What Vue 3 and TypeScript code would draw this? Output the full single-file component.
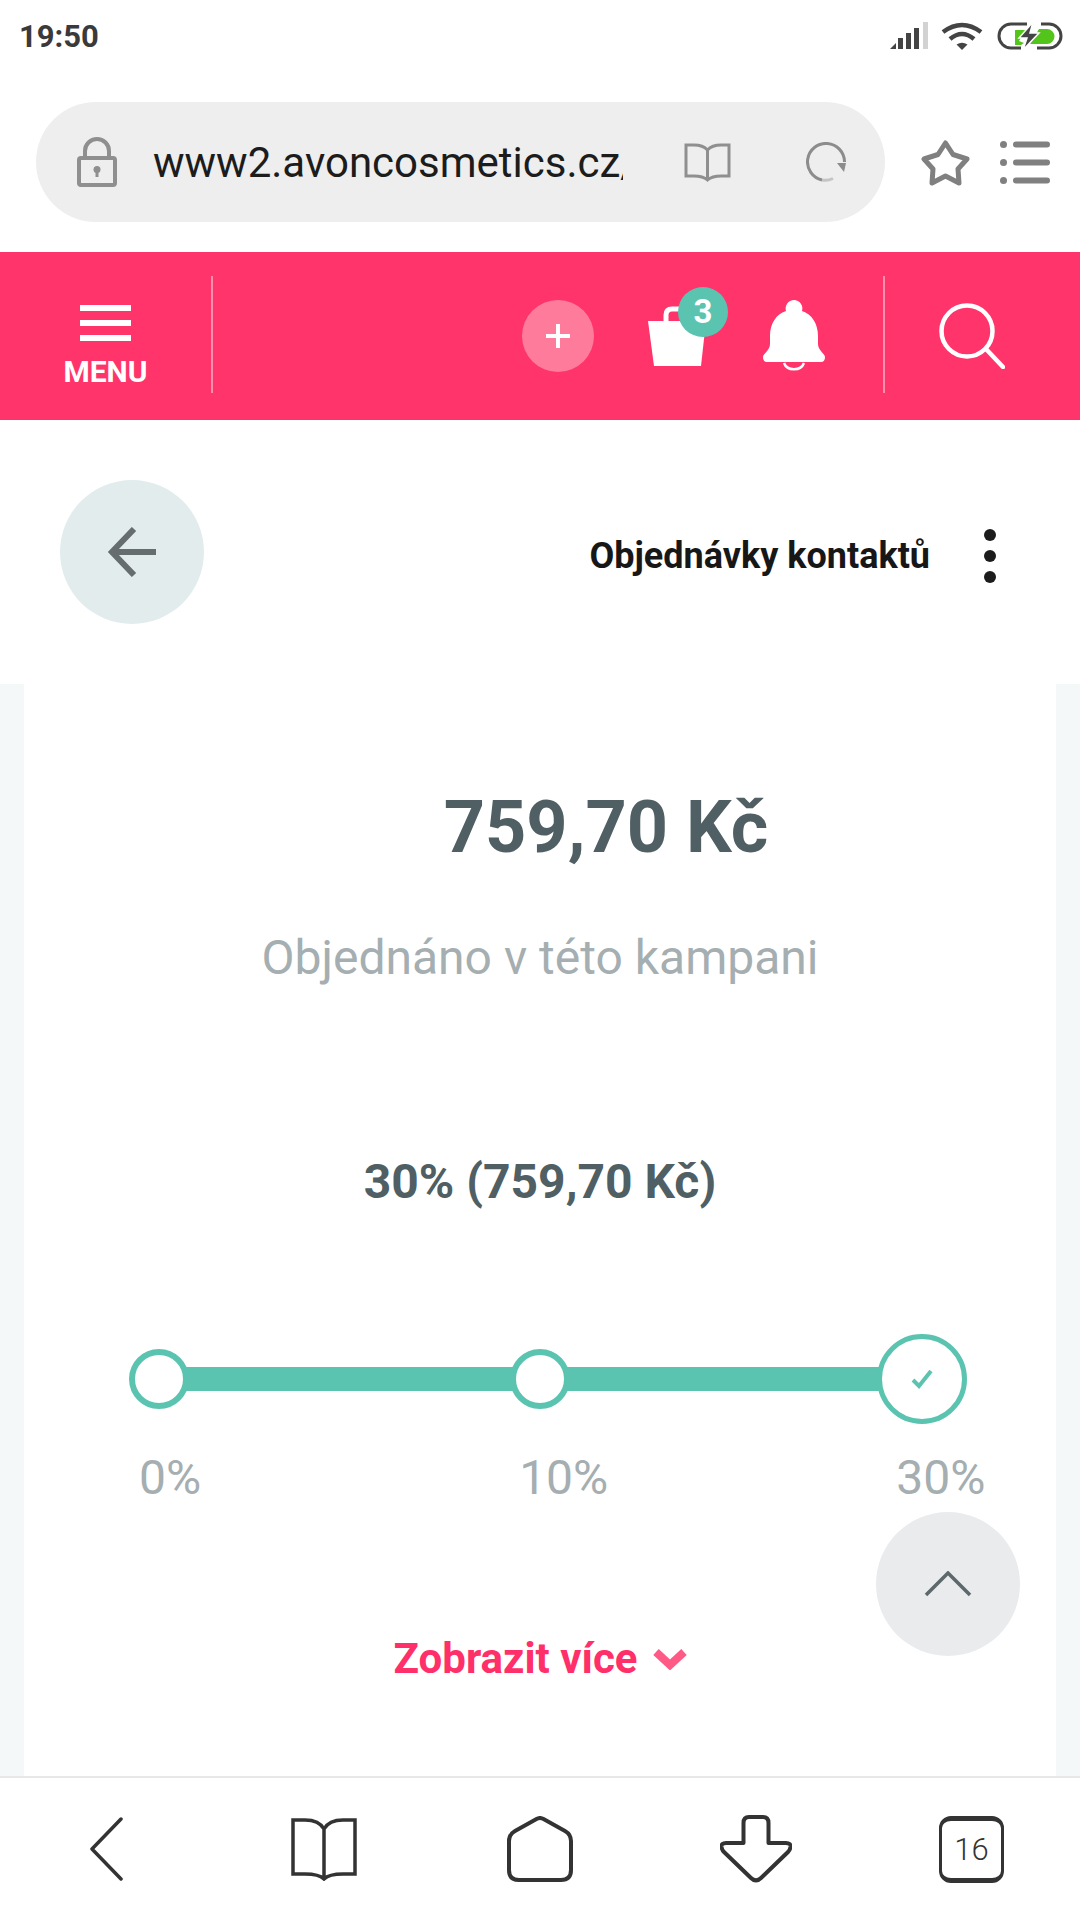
<script setup lang="ts">
const stops = [
  { label: '0%', cls: 'first' },
  { label: '10%', cls: 'mid' },
  { label: '30%', cls: 'last' },
]
</script>

<template>
  <div class="page">
    <div class="status">
      <span class="clock">19:50</span>
      <div class="status-icons">
        <svg width="40" height="28" viewBox="0 0 40 28">
          <polygon points="0,27 6,21 6,27" fill="#444" />
          <rect x="8" y="16" width="5" height="11" fill="#444" />
          <rect x="16" y="11" width="5" height="16" fill="#444" />
          <rect x="24" y="6" width="5" height="21" fill="#444" />
          <rect x="33" y="0" width="5" height="27" fill="#d2d2d2" />
        </svg>
        <svg class="wifi" width="42" height="28" viewBox="0 0 42 28" fill="none" stroke="#444" stroke-width="4.5">
          <path d="M2 10 Q21 -4 40 10" />
          <path d="M9 17 Q21 7 33 17" />
          <path d="M15.500 22.500 Q21 19 26.500 22.500 L21 28 Z" fill="#444" stroke="none" />
        </svg>
        <svg width="66" height="30" viewBox="0 0 66 30">
          <path d="M30 3 H14 A12 12 0 0 0 14 27 H24 M40 27 H52 A12 12 0 0 0 52 3 H44" fill="none" stroke="#444" stroke-width="3" />
          <path d="M18 9 H29 L22 20 L27 22 L24 24 H18 Z" fill="#52c41a" />
          <path d="M42 8 H50 A7 7 0 0 1 50 23 H33 Z" fill="#52c41a" />
          <path d="M36 1 L22 17 H30 L26 29 L42 12 H33 Z" fill="#444" stroke="#fff" stroke-width="1.500" />
        </svg>
      </div>
    </div>

    <div class="browser">
      <div class="urlbar">
        <svg class="lock" width="40" height="50" viewBox="0 0 40 50" fill="none" stroke="#8f8f8f" stroke-width="4">
          <path d="M8 22 V14 A12 12 0 0 1 32 14 V22" />
          <rect x="2" y="21" width="36" height="27" rx="2" />
          <circle cx="20" cy="32.500" r="3.500" fill="#8f8f8f" stroke="none" />
          <rect x="18.500" y="33" width="3" height="7" fill="#8f8f8f" stroke="none" />
        </svg>
        <span class="url">www2.avoncosmetics.cz/</span>
        <svg class="reader" width="47" height="39" viewBox="0 0 47 39" fill="none" stroke="#8f8f8f" stroke-width="3">
          <path d="M23.500 7 Q19 2 10 2 H2 V33 H10 Q19 33 23.500 37 Q28 33 37 33 H45 V2 H37 Q28 2 23.500 7 V37" />
        </svg>
        <svg class="reload" width="40" height="40" viewBox="0 0 40 40" fill="none" stroke="#8c8c8c" stroke-width="3">
          <path d="M27 36.500 A18.500 18.500 0 0 1 16 38" stroke="#c4c4c4" />
          <path d="M16 38 A18.500 18.500 0 1 1 38.500 20" />
          <path d="M31 21 H40 L38 30 Z" fill="#8c8c8c" stroke="none" />
        </svg>
      </div>
      <svg class="star" width="50" height="47" viewBox="0 0 50 47" fill="none" stroke="#808080" stroke-width="5" stroke-linejoin="round">
        <path d="M24.500 4 L32 15.500 L46 20 L37 30 L38 44 L24.500 37 L11 44 L12 30 L3 20 L17 15.500 Z" />
      </svg>
      <svg class="list" width="50" height="43" viewBox="0 0 50 43" fill="#808080">
        <circle cx="3.500" cy="3.500" r="3.500" />
        <rect x="13" y="0.500" width="37" height="6" rx="3" />
        <circle cx="3.500" cy="21.500" r="3.500" />
        <rect x="13" y="18.500" width="37" height="6" rx="3" />
        <circle cx="3.500" cy="39.500" r="3.500" />
        <rect x="13" y="36.500" width="37" height="6" rx="3" />
      </svg>
    </div>

    <header class="site-header">
      <div class="menu">
        <div class="burger"><i></i><i></i><i></i></div>
        <span>MENU</span>
      </div>
      <div class="divider"></div>
      <div class="plus">
        <svg width="26" height="26" viewBox="0 0 26 26" stroke="#fff" stroke-width="4"><path d="M13 1 V25 M1 13 H25" /></svg>
      </div>
      <div class="bag">
        <svg width="58" height="60" viewBox="0 0 58 60">
          <path d="M18 16 V9 Q18 3 24 3 H40" fill="none" stroke="#fff" stroke-width="5" />
          <polygon points="0,15 58,15 53,60 6,60" fill="#fff" />
        </svg>
        <span class="badge">3</span>
      </div>
      <svg class="bell" width="62" height="73" viewBox="0 0 62 73">
        <path d="M31 0 A8.500 8.500 0 0 1 39 11 C49 14 55 24 55 36 V44 C55 50 62 54 62 57 Q62 62 58 62 H4 Q0 62 0 57 C0 54 7 50 7 44 V36 C7 24 13 14 23 11 A8.500 8.500 0 0 1 31 0 Z" fill="#fff" />
        <path d="M21 63 A10.500 9 0 0 0 41 63" fill="none" stroke="#fff" stroke-width="2.500" />
      </svg>
      <div class="divider second"></div>
      <svg class="search" width="66" height="66" viewBox="0 0 66 66" fill="none" stroke="#fff" stroke-width="4.500">
        <circle cx="28" cy="28" r="25.500" />
        <path d="M47 46 L64 64" stroke-linecap="round" />
      </svg>
    </header>

    <div class="subnav">
      <button class="back">
        <svg width="50" height="50" viewBox="0 0 50 50" fill="none" stroke="#666d6f" stroke-width="6">
          <path d="M49 25 H7" />
          <path d="M27 2 L5 25 L27 48" />
        </svg>
      </button>
      <span class="subnav-title">Objednávky kontaktů</span>
      <div class="dots"><i></i><i></i><i></i></div>
    </div>

    <main class="content">
      <section class="card">
        <div class="amount">759,70 Kč</div>
        <p class="amount-sub">Objednáno v této kampani</p>
        <div class="level">30% (759,70 Kč)</div>

        <div class="track">
          <template v-for="(s, i) in stops" :key="s.label">
            <div class="stop" :class="s.cls">
              <svg v-if="s.cls === 'last'" width="22" height="20" viewBox="0 0 22 20" fill="none" stroke="#5bc4b1" stroke-width="4">
                <path d="M2 11 L8 17 L20 2" />
              </svg>
            </div>
            <div v-if="i < stops.length - 1" class="bar" :class="'bar-' + i"></div>
          </template>
        </div>

        <div class="labels">
          <span v-for="s in stops" :key="s.label" :class="'lbl-' + s.cls">{{ s.label }}</span>
        </div>

        <a class="more">
          Zobrazit více
          <svg width="34" height="22" viewBox="0 0 34 22" fill="none" stroke="#ff5a85" stroke-width="8">
            <path d="M3 4 L17 17 L31 4" />
          </svg>
        </a>
      </section>
    </main>

    <button class="to-top">
      <svg width="48" height="26" viewBox="0 0 48 26" fill="none" stroke="#5d686c" stroke-width="3.500">
        <path d="M2 24 L24 2 L46 24" />
      </svg>
    </button>

    <nav class="bottom">
      <svg class="nav-back" width="33" height="64" viewBox="0 0 33 64" fill="none" stroke="#333" stroke-width="3.500" stroke-linecap="round" stroke-linejoin="round">
        <path d="M31 2 L2 32 L31 62" />
      </svg>
      <svg class="nav-book" width="66" height="64" viewBox="0 0 66 64" fill="none" stroke="#333" stroke-width="3.500">
        <path d="M33 12 Q28 3 14 3 H2 V57 H14 Q28 57 33 62 Q38 57 52 57 H64 V3 H52 Q38 3 33 12 V62" />
      </svg>
      <svg class="nav-home" width="66" height="66" viewBox="0 0 66 66" fill="none" stroke="#333" stroke-width="4" stroke-linejoin="round">
        <path d="M29.500 3 Q33 1 36.500 3 L58 15 Q64 18.500 64 25 V54 Q64 64 54 64 H12 Q2 64 2 54 V25 Q2 18.500 8 15 Z" />
      </svg>
      <svg class="nav-down" width="72" height="69" viewBox="0 0 72 69" fill="none" stroke="#333" stroke-width="4" stroke-linejoin="round">
        <path d="M29 2 H43 Q48.500 2 48.500 8 V28 H66 Q71 28 70.500 32 Q70 35 68 37 L41 63 Q36 68 31 63 L4 37 Q2 35 1.500 32 Q1 28 6 28 H23.500 V8 Q23.500 2 29 2 Z" />
      </svg>
      <div class="nav-tabs">16</div>
    </nav>
  </div>
</template>

<style>
html, body { margin: 0; background: #fff; }
</style>

<style scoped>
.page { position: relative; width: 1080px; height: 1920px; overflow: hidden; display: flex; flex-direction: column; background: #fff; font-family: Roboto, sans-serif; }
button { border: none; padding: 0; cursor: pointer; }

.status { height: 72px; flex: none; display: flex; align-items: center; justify-content: space-between; padding: 0 17px 0 19px; }
.clock { font-size: 31px; font-weight: 700; color: #3a3a3a; }
.status-icons { display: flex; align-items: center; gap: 14px; }
.wifi { margin-left: -3px; }

.browser { height: 180px; flex: none; display: flex; align-items: center; padding-left: 36px; }
.urlbar { width: 849px; height: 120px; border-radius: 60px; background: #eee; display: flex; align-items: center; box-sizing: border-box; padding-left: 41px; }
.url { width: 470px; margin-left: 36px; overflow: hidden; white-space: nowrap; font-size: 42px; color: #1c1c1c; }
.reader { margin-left: 61px; }
.reload { margin-left: 75px; }
.star { margin-left: 36px; }
.list { margin-left: 29px; }

.site-header { height: 168px; flex: none; display: flex; align-items: center; background: #ff346b; }
.menu { width: 211px; display: flex; flex-direction: column; align-items: center; padding-top: 19px; color: #fff; font-size: 30px; font-weight: 700; line-height: 30px; }
.burger { display: flex; flex-direction: column; gap: 9px; margin-bottom: 16px; }
.burger i { display: block; width: 51px; height: 6px; background: #fff; }
.divider { width: 2px; height: 117px; margin-bottom: 3px; background: rgba(255, 255, 255, 0.45); }
.plus { width: 72px; height: 72px; margin-left: 309px; border-radius: 50%; background: #ff7b9c; display: flex; align-items: center; justify-content: center; }
.bag { position: relative; width: 58px; height: 60px; margin-left: 54px; }
.bag svg { display: block; }
.badge { position: absolute; left: 30px; top: -19px; width: 50px; height: 50px; border-radius: 50%; background: #5bc4b1; color: #fff; font-size: 33px; font-weight: 700; line-height: 50px; text-align: center; }
.bell { margin-left: 57px; }
.second { margin-left: 58px; }
.search { margin-left: 54px; }

.subnav { height: 264px; flex: none; display: flex; align-items: center; padding: 0 84px 0 60px; }
.back { width: 144px; height: 144px; border-radius: 50%; background: #e2eced; display: flex; align-items: center; justify-content: center; }
.subnav-title { margin: 7px 0 0 auto; font-size: 36px; font-weight: 700; color: #171717; }
.dots { margin: 7px 0 0 54px; display: flex; flex-direction: column; gap: 9px; }
.dots i { display: block; width: 12px; height: 12px; border-radius: 50%; background: #1c1c1c; }

.content { flex: 1; min-height: 0; padding: 0 24px; background: #f4f8f8; display: flex; }
.card { flex: 1; background: #fff; }
.amount { margin-top: 104px; padding-left: 132px; text-align: center; font-size: 72px; font-weight: 700; line-height: 80px; color: #4f5f63; }
.amount-sub { margin: 60px 0 0; text-align: center; font-size: 48px; line-height: 60px; color: #a5aeb0; }
.level { margin-top: 164px; text-align: center; font-size: 48px; font-weight: 700; line-height: 60px; color: #4f5f63; }

.track { margin: 122px 0 0 105px; height: 90px; display: flex; align-items: center; }
.stop { position: relative; z-index: 1; flex: none; box-sizing: border-box; width: 60px; height: 60px; border: 6px solid #5bc4b1; border-radius: 50%; background: #fff; display: flex; align-items: center; justify-content: center; }
.stop.last { width: 90px; height: 90px; border-width: 5px; }
.bar { flex: none; height: 24px; margin: 0 -6px; background: #5bc4b1; }
.bar-0 { width: 333px; }
.bar-1 { width: 319px; }

.labels { margin: 27px 0 0 115px; display: flex; font-size: 48px; line-height: 54px; color: #a5aeb0; }
.lbl-first { margin-right: 318px; }
.lbl-mid { margin-right: 288px; }

.more { margin-top: 129px; display: flex; align-items: center; justify-content: center; gap: 15px; font-size: 42px; font-weight: 700; line-height: 50px; color: #ff2f69; }

.to-top { position: absolute; left: 876px; top: 1512px; width: 144px; height: 144px; border-radius: 50%; background: #e9ebed; display: flex; align-items: center; justify-content: center; }

.bottom { height: 144px; flex: none; box-sizing: border-box; border-top: 2px solid #e8e8e8; display: flex; align-items: center; padding-left: 90px; background: #fff; }
.nav-book { margin-left: 168px; }
.nav-home { margin-left: 150px; }
.nav-down { margin-left: 147px; }
.nav-tabs { box-sizing: border-box; width: 65px; height: 67px; margin-left: 147px; border: 3.5px solid #333; border-top-width: 5px; border-bottom-width: 5px; border-radius: 12px; display: flex; align-items: center; justify-content: center; font-family: Roboto, sans-serif; font-weight: 300; font-size: 31px; color: #333; }
</style>
